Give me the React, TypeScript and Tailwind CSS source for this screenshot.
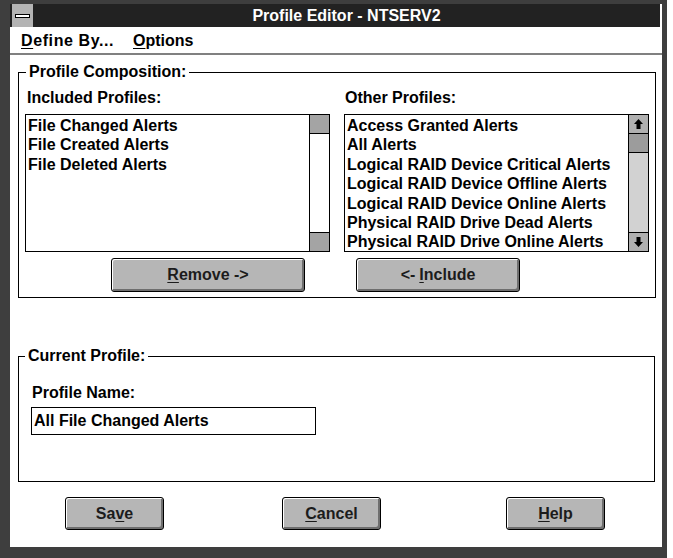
import type { ReactNode } from "react";

const included = ["File Changed Alerts", "File Created Alerts", "File Deleted Alerts"];

const others = [
  "Access Granted Alerts",
  "All Alerts",
  "Logical RAID Device Critical Alerts",
  "Logical RAID Device Offline Alerts",
  "Logical RAID Device Online Alerts",
  "Physical RAID Drive Dead Alerts",
  "Physical RAID Drive Online Alerts",
];

function Arrow({ down }: { down?: boolean }) {
  return (
    <svg width="11" height="12" viewBox="0 0 11 12" className={down ? "rotate-180" : ""}>
      <path d="M5.5 1 L10 6 H7.5 V11 H3.5 V6 H1 Z" fill="#000" />
    </svg>
  );
}

function WinButton({
  children,
  className,
}: {
  children: ReactNode;
  className: string;
}) {
  return (
    <button
      className={`flex items-center justify-center rounded-[3px] border border-black bg-[#b6b6b6] text-[16px] font-bold text-[#1c1c1c] shadow-[inset_1px_1px_0_#fff,inset_-2px_-2px_0_#6e6e6e] ${className}`}
    >
      {children}
    </button>
  );
}

function ListBox({ items, active }: { items: string[]; active?: boolean }) {
  return (
    <div className="flex h-[138px] w-[305px] border border-black bg-white">
      <div className="flex-1 overflow-hidden pl-[2px] pt-[1px] text-[16px] font-bold leading-[19.4px] text-black">
        {items.map((item) => (
          <div key={item} className="whitespace-nowrap">
            {item}
          </div>
        ))}
      </div>
      {active ? (
        <div className="flex w-[20px] flex-col border-l border-black">
          <div className="flex h-[19px] items-center justify-center border-b border-black bg-[#b0b0b0]">
            <Arrow />
          </div>
          <div className="h-[19px] border-b border-black bg-[#9c9c9c]" />
          <div className="flex-1 bg-[#d2d2d2]" />
          <div className="flex h-[19px] items-center justify-center border-t border-black bg-[#b0b0b0]">
            <Arrow down />
          </div>
        </div>
      ) : (
        <div className="flex w-[20px] flex-col border-l border-black">
          <div className="h-[19px] border-b border-black bg-[#a4a4a4]" />
          <div className="flex-1 bg-white" />
          <div className="h-[19px] border-t border-black bg-[#a4a4a4]" />
        </div>
      )}
    </div>
  );
}

export default function App() {
  return (
    <div className="h-[558px] w-[673px] overflow-hidden bg-white font-['Liberation_Sans',Arial,sans-serif]">
      <div className="flex h-[558px] w-[667px] flex-col bg-[#3e3e3e] pb-[11px] pl-[10px] pr-[5px] pt-[4px]">
        {/* title bar */}
        <div className="flex h-[23px] border-r-2 border-white bg-[#222]">
          <div className="ml-[2px] flex h-full w-[21px] items-center justify-center bg-[#b4b4b4]">
            <div className="h-[4px] w-[15px] border border-black bg-white" />
          </div>
          <div className="flex-1 text-center text-[16px] font-bold leading-[23px] text-white">
            Profile Editor - NTSERV2
          </div>
        </div>

        {/* menu bar */}
        <div className="flex h-[28px] items-center border-b-2 border-[#808080] bg-white pl-[11px] pt-[2px] text-[16px] font-bold text-black">
          <span className="w-[112px] tracking-[0.6px]">
            <span className="underline underline-offset-2">D</span>efine By...
          </span>
          <span>
            <span className="underline underline-offset-2">O</span>ptions
          </span>
        </div>

        {/* client area */}
        <div className="flex flex-1 flex-col bg-white pt-[8px] text-[16px] font-bold text-black">
          <fieldset className="ml-[8px] w-[637px] border border-black px-[6px] pb-[5px]">
            <legend className="ml-[1px] px-[3px] leading-[18px]">Profile Composition:</legend>
            <div className="mt-[8px] flex gap-[14px] leading-[18px]">
              <div className="w-[305px] pl-[2px]">Included Profiles:</div>
              <div className="w-[305px] pl-[1px]">Other Profiles:</div>
            </div>
            <div className="mt-[7px] flex gap-[14px]">
              <ListBox items={included} />
              <ListBox items={others} active />
            </div>
            <div className="mt-[6px] flex">
              <WinButton className="ml-[86px] h-[34px] w-[194px]">
                <span className="underline underline-offset-2">R</span>emove -&gt;
              </WinButton>
              <WinButton className="ml-[51px] h-[34px] w-[164px]">
                &lt;- <span className="ml-[4px] underline underline-offset-2">I</span>nclude
              </WinButton>
            </div>
          </fieldset>

          <fieldset className="ml-[8px] mt-[49px] w-[637px] border border-black pb-[46px] pl-[12px]">
            <legend className="-ml-[6px] px-[3px] leading-[18px]">Current Profile:</legend>
            <div className="mt-[19px] pl-[1px] leading-[18px]">Profile Name:</div>
            <div className="mt-[5px] flex h-[28px] w-[285px] items-center border border-black pl-[2px]">
              All File Changed Alerts
            </div>
          </fieldset>

          <div className="mt-[15px] flex">
            <WinButton className="ml-[55px] h-[33px] w-[99px]">
              Sa<span className="underline underline-offset-2">v</span>e
            </WinButton>
            <WinButton className="ml-[118px] h-[33px] w-[99px]">
              <span className="underline underline-offset-2">C</span>ancel
            </WinButton>
            <WinButton className="ml-[125px] h-[33px] w-[99px]">
              <span className="underline underline-offset-2">H</span>elp
            </WinButton>
          </div>
        </div>
      </div>
    </div>
  );
}
